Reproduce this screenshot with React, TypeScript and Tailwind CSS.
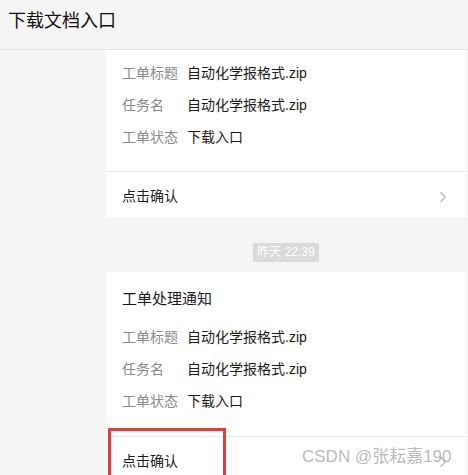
import { ChevronRight } from "lucide-react";

const font = { fontFamily: '"Liberation Sans", "Noto Sans CJK SC", sans-serif' };

function Row({ label, value }: { label: string; value: string }) {
  return (
    <div className="flex h-[32px] items-center text-[14px]">
      <span className="w-[65px] text-[#8a8a8a]">{label}</span>
      <span className="text-[#1a1a1a]">{value}</span>
    </div>
  );
}

export default function App() {
  return (
    <div className="relative h-[475px] w-[468px] overflow-hidden bg-[#f5f5f5]" style={font}>
      {/* Header */}
      <div className="flex h-[50px] items-center border-b border-[#e6e6e6] pl-[8px] pb-[6px] text-[18px] text-[#111]">
        下载文档入口
      </div>

      <div className="pl-[106px] pr-[2px]">
        {/* Card 1 */}
        <div className="bg-white">
          <div className="px-[16px] pt-[7px] pb-[18px]">
            <Row label="工单标题" value="自动化学报格式.zip" />
            <Row label="任务名" value="自动化学报格式.zip" />
            <Row label="工单状态" value="下载入口" />
          </div>
          <div className="flex h-[46px] items-center justify-between border-t border-[#eaeaea] pl-[16px] pr-[14px] pt-[4px] text-[14px] text-[#1a1a1a]">
            <span>点击确认</span>
            <ChevronRight className="h-[18px] w-[18px] text-[#b5b5b5]" strokeWidth={1.5} />
          </div>
        </div>

        {/* Time */}
        <div className="flex justify-center pt-[26px] pb-[10px]">
          <span className="rounded-[2px] bg-[#dadada] px-[4px] text-[12px] leading-[19px] text-white">
            昨天 22:39
          </span>
        </div>

        {/* Card 2 */}
        <div className="relative bg-white">
          <div className="px-[16px] pt-[16px] pb-[19px]">
            <div className="mb-[11px] text-[15px] leading-[22px] text-[#1a1a1a]">工单处理通知</div>
            <Row label="工单标题" value="自动化学报格式.zip" />
            <Row label="任务名" value="自动化学报格式.zip" />
            <Row label="工单状态" value="下载入口" />
          </div>
          <div className="flex h-[46px] items-center justify-between border-t border-[#eaeaea] pl-[16px] pr-[14px] pt-[4px] text-[14px] text-[#1a1a1a]">
            <span>点击确认</span>
            <ChevronRight className="h-[18px] w-[18px] text-[#b5b5b5]" strokeWidth={1.5} />
          </div>
          {/* annotation box */}
          <div className="absolute left-[2px] top-[156px] h-[80px] w-[118px] border-[3px] border-[#e23c3c]" />
        </div>
      </div>

      {/* watermark */}
      <div className="absolute left-[302px] top-[446px] text-[17px] leading-[22px] text-[#a8a8a8]/80">
        CSDN @张耘嘉190
      </div>
    </div>
  );
}
